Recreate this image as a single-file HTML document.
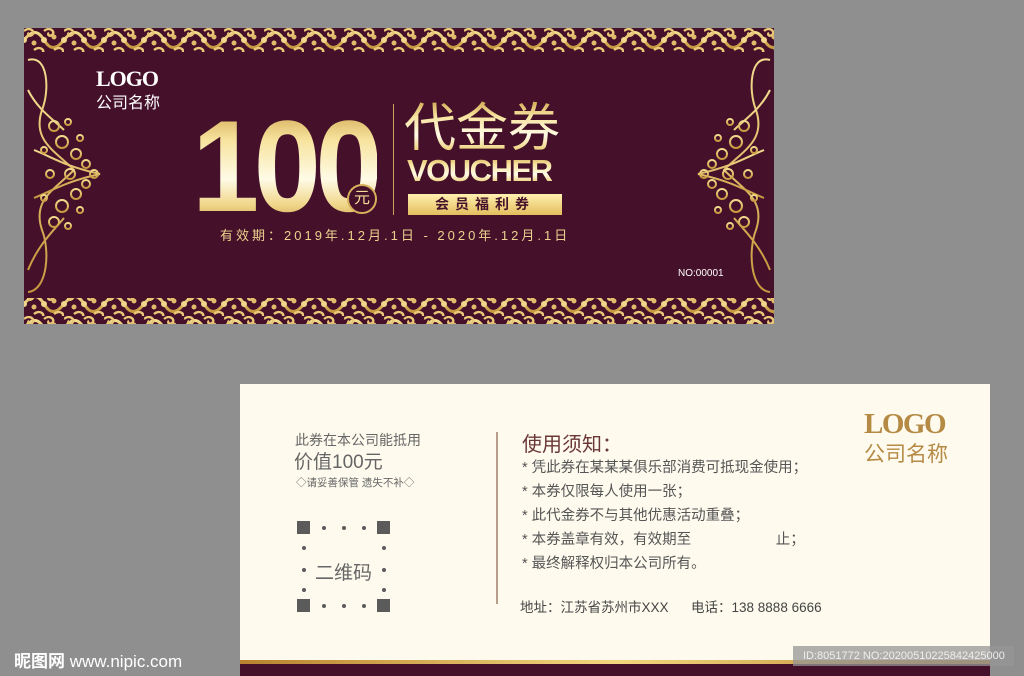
<!DOCTYPE html>
<html><head><meta charset="utf-8"><style>
*{margin:0;padding:0;box-sizing:border-box}
body{width:1024px;height:676px;background:#8f8f8f;position:relative;overflow:hidden;font-family:"Liberation Sans","Noto Sans CJK SC",sans-serif}
.a{position:absolute;white-space:nowrap}
.gold{background:linear-gradient(180deg,#c99a42 0%,#f7e39e 30%,#fffbe6 60%,#f0d689 80%,#c3923b 100%);-webkit-background-clip:text;background-clip:text;color:transparent}
</style></head><body>
<svg class="a" style="left:24px;top:28px" width="750" height="296" viewBox="0 0 750 296">
<defs>
<linearGradient id="g" x1="0" y1="0" x2="0" y2="1"><stop offset="0" stop-color="#f3dc8e"/><stop offset="1" stop-color="#c8993f"/></linearGradient>
<pattern id="band" width="40" height="24" patternUnits="userSpaceOnUse">
<rect width="40" height="24" fill="#45102a"/>
<path d="M0 12 C8 2 14 2 20 12 C26 22 32 22 40 12" fill="none" stroke="url(#g)" stroke-width="3"/>
<path d="M0 3 C6 -2 12 4 8 7 C5 9 3 6 5 5" fill="none" stroke="#e8c877" stroke-width="2.4"/>
<path d="M20 3 C26 -2 32 4 28 7 C25 9 23 6 25 5" fill="none" stroke="#e8c877" stroke-width="2.4"/>
<path d="M10 22 C16 17 22 23 18 25 M30 22 C36 17 42 23 38 25" fill="none" stroke="#e8c877" stroke-width="2.4"/>
<circle cx="20" cy="12" r="3" fill="#f0d58a"/><circle cx="0" cy="12" r="3" fill="#f0d58a"/><circle cx="40" cy="12" r="3" fill="#f0d58a"/>
<circle cx="10" cy="15" r="2.5" fill="#e0bc6a"/><circle cx="30" cy="9" r="2.5" fill="#e0bc6a"/>
</pattern>
<g id="orn" fill="none" stroke="url(#g)" stroke-width="2">
<path d="M4 30 C24 24 26 60 18 80 C8 110 30 120 50 140 C30 160 8 170 18 200 C26 220 24 260 4 262"/>
<path d="M4 60 C14 80 30 90 40 100 M4 240 C14 215 30 200 40 188"/>
<path d="M10 120 C30 128 40 136 76 144 C40 152 30 160 10 168"/>
<circle cx="38" cy="112" r="6"/><circle cx="38" cy="176" r="6"/><circle cx="52" cy="124" r="5"/><circle cx="52" cy="164" r="5"/>
<circle cx="62" cy="134" r="4"/><circle cx="62" cy="154" r="4"/><circle cx="46" cy="144" r="5"/><circle cx="70" cy="144" r="4"/>
<circle cx="30" cy="96" r="5"/><circle cx="30" cy="192" r="5"/><circle cx="26" cy="144" r="4"/>
<circle cx="44" cy="92" r="3"/><circle cx="44" cy="196" r="3"/>
<circle cx="56" cy="108" r="3"/><circle cx="56" cy="180" r="3"/><circle cx="20" cy="120" r="3"/><circle cx="20" cy="168" r="3"/>
</g>
</defs>
<rect width="750" height="296" fill="#45102a"/>
<rect width="750" height="24" fill="url(#band)"/>
<rect y="270" width="750" height="26" fill="url(#band)"/>
<use href="#orn" x="0" y="2"/>
<use href="#orn" transform="translate(750 2) scale(-1 1)"/>
</svg>
<div class="a" style="left:96px;top:66px;color:#fff;font:bold 22px 'Liberation Serif',serif;letter-spacing:-1px">LOGO</div>
<div class="a" style="left:96px;top:89px;color:#fff;font-size:16px">公司名称</div>
<div class="a gold" style="left:192px;top:101px;font:bold 130px/130px 'Liberation Sans',sans-serif;letter-spacing:-6px;transform:scaleX(0.93);transform-origin:left">100</div>
<div class="a" style="left:347px;top:184px;width:30px;height:30px;border-radius:50%;background:#45102a;border:2px solid #d8b05c;color:#f3dc9a;font-size:16px;text-align:center;line-height:26px">元</div>
<div class="a" style="left:393px;top:104px;width:1px;height:111px;background:#c9a35a"></div>
<div class="a gold" style="left:404px;top:97px;font-size:52px;line-height:64px">代金券</div>
<div class="a gold" style="left:407px;top:154px;font:bold 31px/34px 'Liberation Sans',sans-serif;letter-spacing:-1.5px">VOUCHER</div>
<div class="a" style="left:408px;top:194px;width:154px;height:21px;background:linear-gradient(180deg,#fff0b0,#e3bd5d);color:#45102a;font-size:14px;font-weight:bold;text-align:center;line-height:21px;letter-spacing:6px">会员福利券</div>
<div class="a" style="left:220px;top:225px;color:#ecd28e;font-size:13px;letter-spacing:3px">有效期：2019年.12月.1日 - 2020年.12月.1日</div>
<div class="a" style="left:678px;top:268px;color:#fff;font-size:10px">NO:00001</div>

<div class="a" style="left:240px;top:384px;width:750px;height:292px;background:#fefbee"></div>
<div class="a" style="left:240px;top:660px;width:750px;height:4px;background:linear-gradient(90deg,#b8832e,#f3d77f,#b8832e)"></div>
<div class="a" style="left:240px;top:664px;width:750px;height:12px;background:#45102a"></div>
<div class="a" style="left:295px;top:430px;color:#666;font-size:14px">此券在本公司能抵用</div>
<div class="a" style="left:294px;top:447px;color:#666;font-size:19px">价值100元</div>
<div class="a" style="left:296px;top:475px;color:#666;font-size:10.5px">◇请妥善保管 遗失不补◇</div>
<svg class="a" style="left:296px;top:520px" width="96" height="94">
<g fill="#5b5b5b"><rect x="1" y="1" width="13" height="13"/><rect x="81" y="1" width="13" height="13"/><rect x="1" y="79" width="13" height="13"/><rect x="81" y="79" width="13" height="13"/>
<circle cx="28" cy="8" r="2"/><circle cx="48" cy="8" r="2"/><circle cx="68" cy="8" r="2"/>
<circle cx="28" cy="86" r="2"/><circle cx="48" cy="86" r="2"/><circle cx="68" cy="86" r="2"/>
<circle cx="8" cy="28" r="2"/><circle cx="8" cy="50" r="2"/><circle cx="8" cy="70" r="2"/>
<circle cx="88" cy="28" r="2"/><circle cx="88" cy="50" r="2"/><circle cx="88" cy="70" r="2"/></g></svg>
<div class="a" style="left:315px;top:558px;color:#666;font-size:19px">二维码</div>
<div class="a" style="left:496px;top:432px;width:2px;height:172px;background:#b79e8c"></div>
<div class="a" style="left:522px;top:428px;color:#6b3838;font-size:20px">使用须知：</div>
<div class="a" style="left:522px;top:456px;color:#555;font-size:14.5px;line-height:24px">
* 凭此券在某某某俱乐部消费可抵现金使用；<br>* 本券仅限每人使用一张；<br>* 此代金券不与其他优惠活动重叠；<br>* 本券盖章有效，有效期至&nbsp;&nbsp;&nbsp;&nbsp;&nbsp;&nbsp;&nbsp;&nbsp;&nbsp;&nbsp;&nbsp;&nbsp;&nbsp;&nbsp;&nbsp;&nbsp;&nbsp;&nbsp;&nbsp;&nbsp;&nbsp;止；<br>* 最终解释权归本公司所有。</div>
<div class="a" style="left:520px;top:596px;color:#444;font-size:13.5px">地址：江苏省苏州市XXX&nbsp;&nbsp;&nbsp;&nbsp;&nbsp;&nbsp;电话：138 8888 6666</div>
<div class="a" style="left:864px;top:408px;color:#b58a45;font:bold 29px 'Liberation Serif',serif;letter-spacing:-1.5px">LOGO</div>
<div class="a" style="left:864px;top:438px;color:#b58a45;font-size:21px">公司名称</div>
<div class="a" style="left:14px;top:647px;color:#fff;font-size:17px;font-weight:bold">昵图网 <span style="font-weight:normal">www.nipic.com</span></div>
<div class="a" style="left:793px;top:646px;width:221px;height:20px;background:rgba(150,150,150,0.75);color:#eee;font-size:11px;line-height:20px;padding-left:10px">ID:8051772 NO:20200510225842425000</div>
</body></html>
